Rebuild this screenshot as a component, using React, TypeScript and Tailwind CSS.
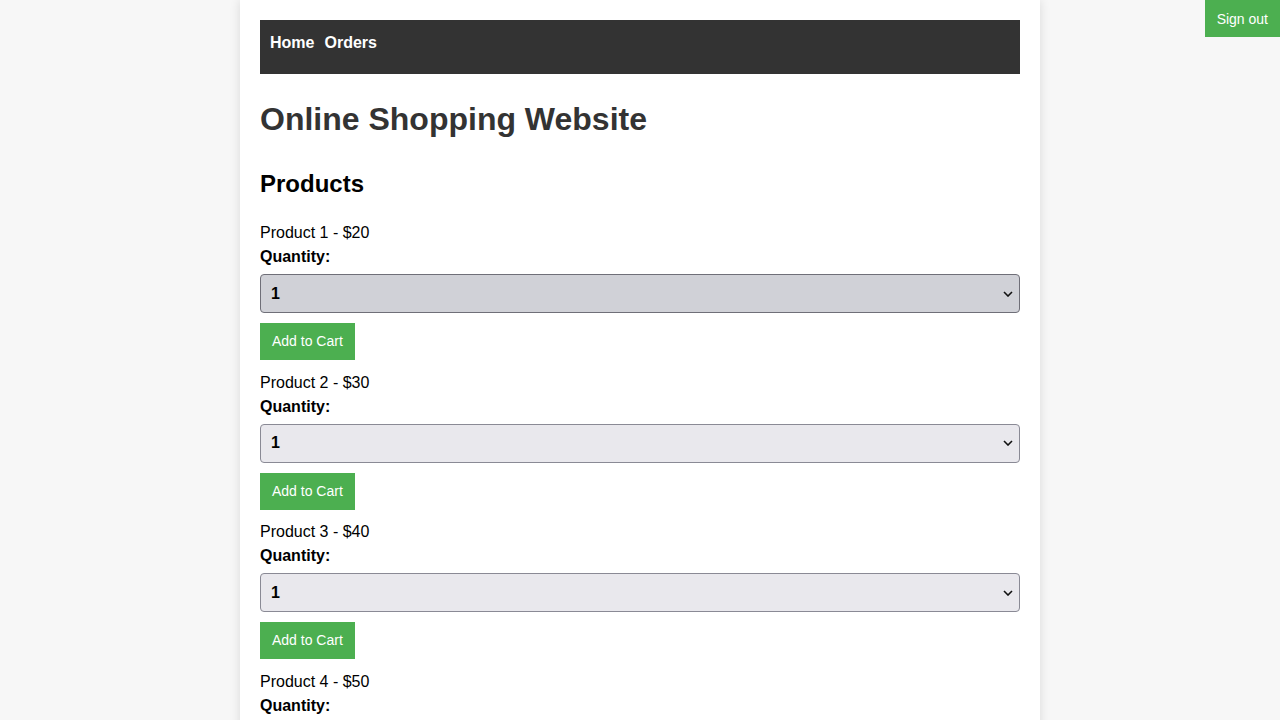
import React from "react";

const products = [
  { name: "Product 1", price: 20 },
  { name: "Product 2", price: 30 },
  { name: "Product 3", price: 40 },
  { name: "Product 4", price: 50 },
];

function Chevron() {
  return (
    <svg
      width="10"
      height="6"
      viewBox="0 0 10 6"
      className="pointer-events-none absolute right-[7px] top-1/2 -translate-y-1/2"
    >
      <path d="M1 1l4 4 4-4" fill="none" stroke="#111" strokeWidth="1.6" />
    </svg>
  );
}

export default function App() {
  return (
    <div className="min-h-screen bg-[#f7f7f7] font-['Liberation_Sans',Arial,sans-serif] text-black">
      <button className="fixed right-0 top-0 z-10 h-[37px] bg-[#4caf50] px-[12px] pt-[2px] text-[14px] text-white">
        Sign out
      </button>

      <div className="mx-auto w-[800px] bg-white px-[20px] pt-[20px] pb-[40px] shadow-[0_0_10px_rgba(0,0,0,0.12)]">
        {/* Nav */}
        <nav className="flex h-[54px] items-start gap-[10px] bg-[#333333] px-[10px] pt-[11px]">
          <a className="text-[16px] font-bold text-white">Home</a>
          <a className="text-[16px] font-bold text-white">Orders</a>
        </nav>

        <h1 className="mt-[27px] text-[32px] leading-[37px] font-bold text-[#333333]">
          Online Shopping Website
        </h1>

        <h2 className="mt-[32px] text-[24px] leading-[28px] font-bold">Products</h2>

        <div className="mt-[26px]">
          {products.map((p, i) => (
            <div key={i} className="mb-[13.5px]">
              <p className="text-[16px] leading-[18px]">
                {p.name} - ${p.price}
              </p>
              <label className="mt-[6px] block text-[16px] leading-[18px] font-bold">
                Quantity:
              </label>
              <div className="relative mt-[8px]">
                <select
                  defaultValue="1"
                  className={
                    i === 0
                      ? "h-[39px] w-full appearance-none rounded-[4px] border border-[#6f6f78] bg-[#d0d1d7] px-[10px] text-[16px] font-bold"
                      : "h-[39px] w-full appearance-none rounded-[4px] border border-[#8a8a95] bg-[#e9e8ed] px-[10px] text-[16px] font-bold"
                  }
                >
                  <option value="1">1</option>
                  <option value="2">2</option>
                  <option value="3">3</option>
                  <option value="4">4</option>
                  <option value="5">5</option>
                </select>
                <Chevron />
              </div>
              <button className="mt-[10px] h-[37px] bg-[#4caf50] px-[12px] text-[14px] text-white">
                Add to Cart
              </button>
            </div>
          ))}
        </div>
      </div>
    </div>
  );
}
